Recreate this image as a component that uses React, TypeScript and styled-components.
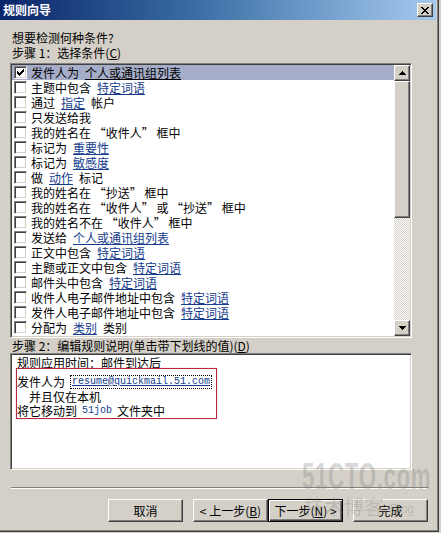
import React from 'react';
import styled, { createGlobalStyle, css } from 'styled-components';

const FACE = '#d4d0c8';
const LINK = '#163c8c';
const CJK = `"Noto Sans CJK SC", "Noto Sans", sans-serif`;

const Global = createGlobalStyle`
  html, body { margin: 0; padding: 0; background: ${FACE}; }
  body { font-family: ${CJK}; font-size: 12px; color: #000; }
`;

const sunken = css`
  box-sizing: border-box;
  border: 1px solid;
  border-color: #808080 #fff #fff #808080;
  box-shadow: inset 1px 1px #404040, inset -1px -1px ${FACE};
  padding: 1px;
  background: #fff;
`;

const raised = css`
  box-sizing: border-box;
  background: ${FACE};
  border: 1px solid;
  border-color: #fff #404040 #404040 #fff;
  box-shadow: inset -1px -1px #808080;
`;

const Window = styled.div`
  position: relative;
  width: 439px;
  height: 532px;
  box-sizing: border-box;
  background: ${FACE};
  padding: 0 3px 3px 0;
  box-shadow: inset -1px -1px #404040, inset -2px -2px #808080;
  display: flex;
  flex-direction: column;
  overflow: hidden;
`;

const TitleBar = styled.div`
  height: 20px;
  flex: none;
  display: flex;
  align-items: center;
  justify-content: space-between;
  padding: 0 2px 0 3px;
  background: linear-gradient(to right, #0a246a 0%, #3a6ea5 45%, #a6caf0 100%);
  color: #fff;
  font-weight: bold;
  font-size: 12px;
  line-height: 20px;
`;

const CloseButton = styled.div`
  ${raised};
  width: 16px;
  height: 14px;
  display: flex;
  align-items: center;
  justify-content: center;
  margin-right: 1px;
`;

const Content = styled.div`
  flex: 1;
  display: flex;
  flex-direction: column;
  padding: 10px 8px 0 10px;
`;

const Prompt = styled.div`
  line-height: 15px;
  height: 15px;
  margin-left: 2px;
  white-space: nowrap;
`;

const U = styled.span`
  text-decoration: underline;
`;

const ListBox = styled.div`
  ${sunken};
  margin-top: 3px;
  width: 402px;
  height: 275px;
  display: flex;
`;

const Rows = styled.div`
  flex: 1;
  display: flex;
  flex-direction: column;
  overflow: hidden;
`;

const Row = styled.div<{ $selected?: boolean }>`
  height: 15px;
  flex: none;
  display: flex;
  align-items: center;
  line-height: 15px;
  white-space: nowrap;
  background: ${(p) => (p.$selected ? '#a5adc8' : 'transparent')};
`;

const CheckBox = styled.div`
  width: 13px;
  height: 13px;
  flex: none;
  box-sizing: border-box;
  margin: 0 4px 0 2px;
  border: 1px solid;
  border-color: #808080 #fff #fff #808080;
  box-shadow: inset 1px 1px #404040, inset -1px -1px ${FACE};
  background: #fff;
  display: flex;
  align-items: center;
  justify-content: center;
`;

const RowText = styled.span`
  display: flex;
  gap: 6px;
`;

const Link = styled.span<{ $plain?: boolean }>`
  color: ${(p) => (p.$plain ? '#000' : LINK)};
  text-decoration: underline;
`;

const ScrollBar = styled.div`
  width: 16px;
  flex: none;
  display: flex;
  flex-direction: column;
`;

const ScrollButton = styled.div`
  ${raised};
  width: 16px;
  height: 16px;
  flex: none;
  display: flex;
  align-items: center;
  justify-content: center;
`;

const Thumb = styled.div`
  ${raised};
  width: 16px;
  height: 137px;
  flex: none;
`;

const Track = styled.div`
  flex: 1;
  background: repeating-conic-gradient(#fff 0 25%, ${FACE} 0 50%) 0 0 / 2px 2px;
`;

const DescBox = styled.div`
  ${sunken};
  width: 402px;
  height: 117px;
  padding: 3px 0 0 6px;
  display: flex;
  flex-direction: column;
  align-items: flex-start;
`;

const DescLine = styled.div<{ $h?: number; $indent?: number }>`
  height: ${(p) => p.$h ?? 15}px;
  line-height: ${(p) => p.$h ?? 15}px;
  padding-left: ${(p) => p.$indent ?? 0}px;
  white-space: nowrap;
  display: flex;
  align-items: center;
  gap: 5px;
`;

const RedFrame = styled.div`
  border: 1px solid #b3283a;
  box-shadow: 0 0 1px rgba(220, 80, 100, 0.5);
  padding: 5px 4px 0 0;
  margin-left: -1px;
  display: flex;
  flex-direction: column;
`;

const Email = styled.span`
  font-family: "Liberation Mono", "DejaVu Sans Mono", monospace;
  font-size: 10px;
  line-height: 12px;
  color: ${LINK};
  text-decoration: underline;
  border: 1px dotted #000;
  padding: 0 1px;
`;

const Mono = styled.span`
  font-family: "Liberation Mono", "DejaVu Sans Mono", monospace;
  font-size: 10px;
  color: ${LINK};
`;

const Separator = styled.div`
  margin: 17px 0 0 1px;
  width: 417px;
  border-top: 1px solid #808080;
  border-bottom: 1px solid #fff;
`;

const ButtonRow = styled.div`
  margin-top: 10px;
  display: flex;
  justify-content: flex-end;
`;

const Button = styled.div<{ $gap?: number; $default?: boolean }>`
  ${raised};
  width: 75px;
  height: 23px;
  margin-left: ${(p) => p.$gap ?? 0}px;
  display: flex;
  align-items: center;
  justify-content: center;
  line-height: 21px;
  white-space: nowrap;
  ${(p) =>
    p.$default &&
    css`
      border: 1px solid #000;
      box-shadow: inset 1px 1px #fff, inset -1px -1px #404040, inset -2px -2px #808080;
    `}
`;

const Watermark = styled.div`
  position: absolute;
  left: 302px;
  top: 458px;
  pointer-events: none;
  color: rgba(120, 120, 120, 0.28);
  display: flex;
  flex-direction: column;
`;

const WmBig = styled.div`
  font-family: "Liberation Sans", Arial, sans-serif;
  font-weight: bold;
  font-size: 36px;
  line-height: 38px;
  transform: scaleX(0.62);
  transform-origin: left center;
  white-space: nowrap;
  letter-spacing: 1px;
`;

const WmSmall = styled.div`
  display: flex;
  align-items: flex-end;
  gap: 6px;
  font-size: 20px;
  line-height: 22px;
  margin-left: 2px;
  white-space: nowrap;
`;

const WmBlog = styled.span`
  font-family: "Liberation Sans", Arial, sans-serif;
  font-size: 12px;
  line-height: 18px;
`;

type Seg = { t: string; link?: boolean };

const rows: Seg[][] = [
  [{ t: '发件人为' }, { t: '个人或通讯组列表', link: true }],
  [{ t: '主题中包含' }, { t: '特定词语', link: true }],
  [{ t: '通过' }, { t: '指定', link: true }, { t: '帐户' }],
  [{ t: '只发送给我' }],
  [{ t: '我的姓名在 “收件人” 框中' }],
  [{ t: '标记为' }, { t: '重要性', link: true }],
  [{ t: '标记为' }, { t: '敏感度', link: true }],
  [{ t: '做' }, { t: '动作', link: true }, { t: '标记' }],
  [{ t: '我的姓名在 “抄送” 框中' }],
  [{ t: '我的姓名在 “收件人” 或 “抄送” 框中' }],
  [{ t: '我的姓名不在 “收件人” 框中' }],
  [{ t: '发送给' }, { t: '个人或通讯组列表', link: true }],
  [{ t: '正文中包含' }, { t: '特定词语', link: true }],
  [{ t: '主题或正文中包含' }, { t: '特定词语', link: true }],
  [{ t: '邮件头中包含' }, { t: '特定词语', link: true }],
  [{ t: '收件人电子邮件地址中包含' }, { t: '特定词语', link: true }],
  [{ t: '发件人电子邮件地址中包含' }, { t: '特定词语', link: true }],
  [{ t: '分配为' }, { t: '类别', link: true }, { t: '类别' }],
];

const CheckMark = () => (
  <svg width="7" height="7" viewBox="0 0 7 7" shapeRendering="crispEdges">
    <path d="M6 0h1v3h-1v1h-1v1h-1v1h-1v1h-1v-1h-1v-1h-1v-3h1v1h1v1h1v-1h1v-1h1v-1h1z" fill="#000" />
  </svg>
);

const CloseGlyph = () => (
  <svg width="8" height="7" viewBox="0 0 8 7" shapeRendering="crispEdges">
    <path d="M0 0h2v1h1v1h2v-1h1v-1h2v1h-1v1h-1v1h-1v1h1v1h1v1h1v1h-2v-1h-1v-1h-2v1h-1v1h-2v-1h1v-1h1v-1h1v-1h-1v-1h-1v-1h-1z" fill="#000" />
  </svg>
);

const ArrowUp = () => (
  <svg width="7" height="4" viewBox="0 0 7 4" shapeRendering="crispEdges">
    <path d="M3 0h1v1h1v1h1v1h1v1h-7v-1h1v-1h1v-1h1z" fill="#000" />
  </svg>
);

const ArrowDown = () => (
  <svg width="7" height="4" viewBox="0 0 7 4" shapeRendering="crispEdges">
    <path d="M0 0h7v1h-1v1h-1v1h-1v1h-1v-1h-1v-1h-1v-1h-1z" fill="#000" />
  </svg>
);

export default function App() {
  return (
    <>
      <Global />
      <Window>
        <TitleBar>
          <span>规则向导</span>
          <CloseButton>
            <CloseGlyph />
          </CloseButton>
        </TitleBar>
        <Content>
          <Prompt>想要检测何种条件?</Prompt>
          <Prompt>
            步骤 1：选择条件(<U>C</U>)
          </Prompt>
          <ListBox>
            <Rows>
              {rows.map((segs, i) => (
                <Row key={i} $selected={i === 0}>
                  <CheckBox>{i === 0 && <CheckMark />}</CheckBox>
                  <RowText>
                    {segs.map((s, j) =>
                      s.link ? (
                        <Link key={j} $plain={i === 0}>
                          {s.t}
                        </Link>
                      ) : (
                        <span key={j}>{s.t}</span>
                      )
                    )}
                  </RowText>
                </Row>
              ))}
            </Rows>
            <ScrollBar>
              <ScrollButton>
                <ArrowUp />
              </ScrollButton>
              <Thumb />
              <Track />
              <ScrollButton>
                <ArrowDown />
              </ScrollButton>
            </ScrollBar>
          </ListBox>
          <Prompt>
            步骤 2：编辑规则说明(单击带下划线的值)(<U>D</U>)
          </Prompt>
          <DescBox>
            <DescLine $h={11}>规则应用时间：邮件到达后</DescLine>
            <RedFrame>
              <DescLine $h={15}>
                <span>发件人为</span>
                <Email>resume@quickmail.51.com</Email>
              </DescLine>
              <DescLine $h={15} $indent={12}>
                并且仅在本机
              </DescLine>
              <DescLine $h={14}>
                <span>将它移动到</span>
                <Mono>51job</Mono>
                <span>文件夹中</span>
              </DescLine>
            </RedFrame>
          </DescBox>
          <Separator />
          <ButtonRow>
            <Button>取消</Button>
            <Button $gap={10}>
              &lt; 上一步(<U>B</U>)
            </Button>
            <Button $default>
              下一步(<U>N</U>) &gt;
            </Button>
            <Button $gap={10}>完成</Button>
          </ButtonRow>
        </Content>
        <Watermark>
          <WmBig>51CTO.com</WmBig>
          <WmSmall>
            <span>技术博客</span>
            <WmBlog>Blog</WmBlog>
          </WmSmall>
        </Watermark>
      </Window>
    </>
  );
}
